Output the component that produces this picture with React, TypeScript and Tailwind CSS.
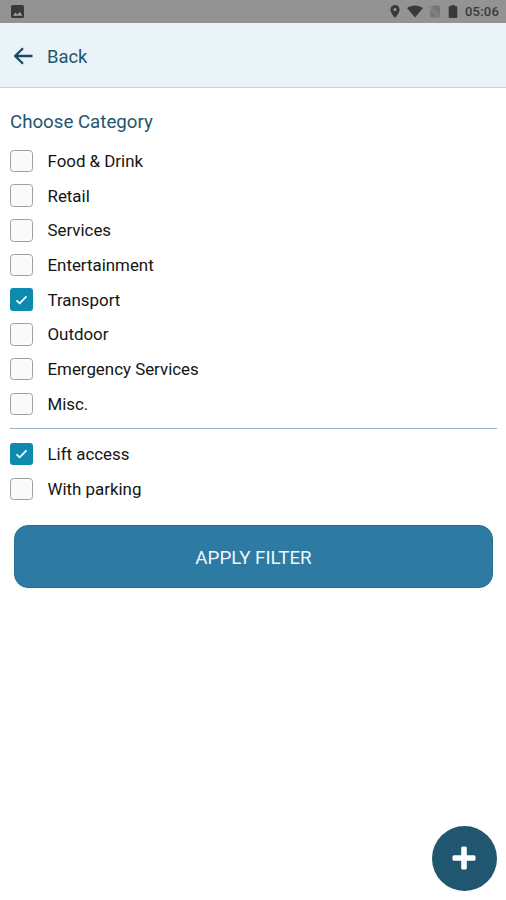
import { useState } from "react";

const categories = [
  "Food & Drink",
  "Retail",
  "Services",
  "Entertainment",
  "Transport",
  "Outdoor",
  "Emergency Services",
  "Misc.",
];

const features = ["Lift access", "With parking"];

function StatusBar() {
  return (
    <div className="flex h-[23px] items-center justify-between bg-[#939393] pl-[11px] pr-[7px] text-[#393939]">
      <svg className="h-[13px] w-[13px]" viewBox="0 0 12 12">
        <rect width="12" height="12" rx="1.5" fill="currentColor" />
        <path d="M1.8 10 4.2 7l1.7 2 2.2-2.8 2.4 3.8z" fill="#a3a3a3" />
      </svg>
      <div className="flex items-center">
        <svg className="h-[13px] w-[10px]" viewBox="0 0 10 13">
          <path
            d="M5 0a4.6 4.6 0 0 0-4.6 4.6C.4 8 5 13 5 13s4.6-5 4.6-8.4A4.6 4.6 0 0 0 5 0zm0 6.2a1.6 1.6 0 1 1 0-3.2 1.6 1.6 0 0 1 0 3.2z"
            fill="currentColor"
            fillRule="evenodd"
          />
        </svg>
        <svg className="ml-[7px] h-[13px] w-4" viewBox="0 0 16 12">
          <path d="M0 2.6C4.8-.8 11.2-.8 16 2.6L8 12z" fill="currentColor" />
        </svg>
        <svg className="ml-[6px] h-[13px] w-[12px] text-[#777777]" viewBox="0 0 12 13">
          <path d="M4.5.5H10q1 0 1 1v9L2.8 2.2z" fill="currentColor" />
          <path d="M1.2 4v7.5q0 1 1 1h7.6z" fill="currentColor" />
          <path d="M.5 1.2 11.5 12.5" stroke="currentColor" strokeWidth="1.1" />
        </svg>
        <svg className="ml-[7px] h-[13px] w-[10px]" viewBox="0 0 9 13">
          <path d="M2.7 0h3.6v1.3H8q.8 0 .8.8v10q0 .9-.8.9H1q-.8 0-.8-.9v-10q0-.8.8-.8h1.7z" fill="currentColor" />
        </svg>
        <span className="ml-[7px] text-[13px] font-medium leading-none tracking-[0.2px]">05:06</span>
      </div>
    </div>
  );
}

type OptionProps = {
  label: string;
  checked: boolean;
  onToggle: () => void;
};

function Option({ label, checked, onToggle }: OptionProps) {
  return (
    <button
      type="button"
      role="checkbox"
      aria-checked={checked}
      onClick={onToggle}
      className="flex h-[34.7px] items-center gap-[15px] text-left"
    >
      {checked ? (
        <span className="flex size-[22.5px] items-center justify-center rounded-[3px] bg-[#0d8aad]">
          <svg className="h-[10px] w-[13px]" viewBox="0 0 14 11" fill="none">
            <path d="M1.5 5.8 5 9.2 12.5 1.5" stroke="white" strokeWidth="1.9" />
          </svg>
        </span>
      ) : (
        <span className="size-[22.5px] rounded-[3.5px] border-[1.5px] border-[#a0a0a0] bg-[#fafafa]" />
      )}
      <span className="pt-px text-[16.9px] leading-none tracking-[-0.01px] text-[#151515]">{label}</span>
    </button>
  );
}

export default function App() {
  const [selected, setSelected] = useState(["Transport", "Lift access"]);

  const toggle = (label: string) => {
    setSelected((prev) => (prev.includes(label) ? prev.filter((s) => s !== label) : [...prev, label]));
  };

  return (
    <div className="relative flex h-[900px] w-[506px] flex-col overflow-hidden bg-white font-['Roboto',sans-serif]">
      <StatusBar />

      <header className="flex h-[65px] items-center gap-[14px] border-b border-[#bdd5df] bg-[#eaf3f8] pl-[13px] pt-[3px] text-[#23566f]">
        <svg className="mb-px h-[18px] w-[20px]" viewBox="0 0 20 18" fill="none">
          <path d="M19.5 9H2.5M10 1.2 2.2 9l7.8 7.8" stroke="#174a6a" strokeWidth="2.3" />
        </svg>
        <span className="pt-0.5 text-[18.4px] leading-none">Back</span>
      </header>

      <main className="flex flex-col pl-[10px] pr-[9px]">
        <h1 className="mt-6 text-[18.7px] leading-5 text-[#23566f]">Choose Category</h1>

        <div className="mt-[11.6px] flex flex-col">
          {categories.map((label) => (
            <Option key={label} label={label} checked={selected.includes(label)} onToggle={() => toggle(label)} />
          ))}
        </div>

        <div className="mt-[6.8px] h-px bg-[#96b6c9]" />

        <div className="mt-[8px] flex flex-col">
          {features.map((label) => (
            <Option key={label} label={label} checked={selected.includes(label)} onToggle={() => toggle(label)} />
          ))}
        </div>

        <button
          type="button"
          className="ml-1 mr-1 mt-[18.5px] h-[63px] rounded-[14px] border border-[#22708f] bg-[#2d7ba2] pt-[3px] text-[18.8px] text-[#eef6fb]"
        >
          APPLY FILTER
        </button>
      </main>

      <button
        type="button"
        aria-label="Add"
        className="absolute bottom-[9px] right-[9px] flex size-[65px] items-center justify-center rounded-full bg-[#20566f]"
      >
        <svg className="mb-0.5 mr-px size-6" viewBox="0 0 24 24" fill="white">
          <rect x="9.2" y="0.5" width="5.6" height="23" rx="1.5" />
          <rect x="0.5" y="9.2" width="23" height="5.6" rx="1.5" />
        </svg>
      </button>
    </div>
  );
}
